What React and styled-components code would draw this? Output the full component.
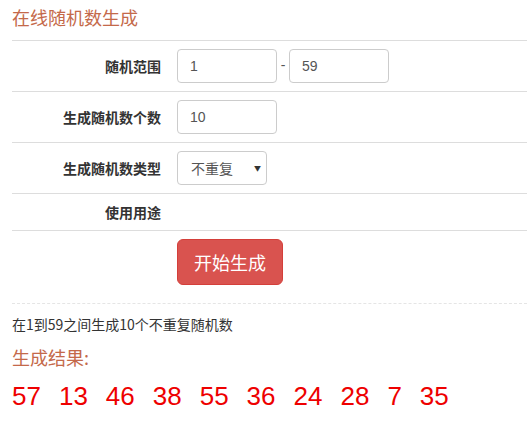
import React from 'react';
import styled, { createGlobalStyle } from 'styled-components';

const GlobalStyle = createGlobalStyle`
    body {
        margin: 0;
        font-family: "Liberation Sans", "Noto Sans CJK SC", sans-serif;
        font-size: 14px;
        line-height: 1.42857;
        color: #333;
        background: #fff;
    }
`;

const Page = styled.div`
    padding: 0 0 0 12px;
`;

const Title = styled.h3`
    margin: 0;
    padding: 8px 0 10px;
    font-size: 18px;
    font-weight: normal;
    line-height: 22px;
    color: #c4694a;
    border-bottom: 1px solid #ddd;
`;

const Form = styled.div`
    display: flex;
    flex-direction: column;
`;

const Row = styled.div`
    display: flex;
    align-items: center;
    padding: 8px 0;
    border-bottom: ${p => (p.$last ? 'none' : '1px solid #ddd')};
    min-height: 20px;
`;

const Label = styled.div`
    width: 149px;
    text-align: right;
    font-weight: bold;
    font-family: "Noto Sans CJK SC", sans-serif;
    font-size: 14px;
    line-height: 20px;
    padding-right: 16px;
`;

const Field = styled.div`
    display: flex;
    align-items: center;
`;

const Input = styled.input`
    box-sizing: border-box;
    width: 100px;
    height: 34px;
    padding: 6px 12px;
    font-family: "Liberation Sans", sans-serif;
    font-size: 14px;
    color: #555;
    border: 1px solid #ccc;
    border-radius: 4px;
    outline: none;
`;

const Dash = styled.span`
    width: 12px;
    text-align: center;
    color: #555;
`;

const SelectBox = styled.div`
    position: relative;
    box-sizing: border-box;
    width: 90px;
    height: 34px;
    border: 1px solid #ccc;
    border-radius: 4px;
    display: flex;
    align-items: center;
    padding-left: 13px;
    font-family: "Noto Sans CJK SC", sans-serif;
    font-size: 14px;
    color: #555;
`;

const Caret = styled.span`
    position: absolute;
    right: 5px;
    top: 11px;
    font-size: 7px;
    line-height: 10px;
    color: #333;
`;

const Button = styled.button`
    box-sizing: border-box;
    width: 106px;
    height: 46px;
    padding: 10px 16px;
    font-family: "Noto Sans CJK SC", sans-serif;
    font-size: 18px;
    line-height: 24px;
    color: #fff;
    background: #d9534f;
    border: 1px solid #d43f3a;
    border-radius: 6px;
    cursor: pointer;
`;

const Divider = styled.hr`
    margin: 10px 0 0;
    border: 0;
    border-top: 1px dashed #e5e5e5;
`;

const Summary = styled.p`
    margin: 10px 0 0;
    font-family: "Noto Sans CJK SC", sans-serif;
    font-size: 14px;
    line-height: 20px;
    color: #333;
`;

const ResultTitle = styled.div`
    margin-top: 11px;
    font-family: "Noto Sans CJK SC", sans-serif;
    font-size: 18px;
    line-height: 24px;
    color: #c4694a;
`;

const Numbers = styled.div`
    margin-top: 9px;
    display: flex;
    font-family: "Liberation Sans", sans-serif;
    font-size: 26px;
    line-height: 36px;
    color: #e00;
`;

const Num = styled.span`
    margin-right: 18px;
`;

const results = [57, 13, 46, 38, 55, 36, 24, 28, 7, 35];

const App = () => {
    return (
        <Page>
            <GlobalStyle />
            <Title>在线随机数生成</Title>
            <Form>
                <Row>
                    <Label>随机范围</Label>
                    <Field>
                        <Input defaultValue="1" />
                        <Dash>-</Dash>
                        <Input defaultValue="59" />
                    </Field>
                </Row>
                <Row>
                    <Label>生成随机数个数</Label>
                    <Field>
                        <Input defaultValue="10" />
                    </Field>
                </Row>
                <Row>
                    <Label>生成随机数类型</Label>
                    <Field>
                        <SelectBox>
                            不重复
                            <Caret>▼</Caret>
                        </SelectBox>
                    </Field>
                </Row>
                <Row>
                    <Label>使用用途</Label>
                </Row>
                <Row $last>
                    <Label />
                    <Button>开始生成</Button>
                </Row>
            </Form>
            <Divider />
            <Summary>在1到59之间生成10个不重复随机数</Summary>
            <ResultTitle>生成结果:</ResultTitle>
            <Numbers>
                {results.map((n, i) => (
                    <Num key={i}>{n}</Num>
                ))}
            </Numbers>
        </Page>
    );
};

export default App;
